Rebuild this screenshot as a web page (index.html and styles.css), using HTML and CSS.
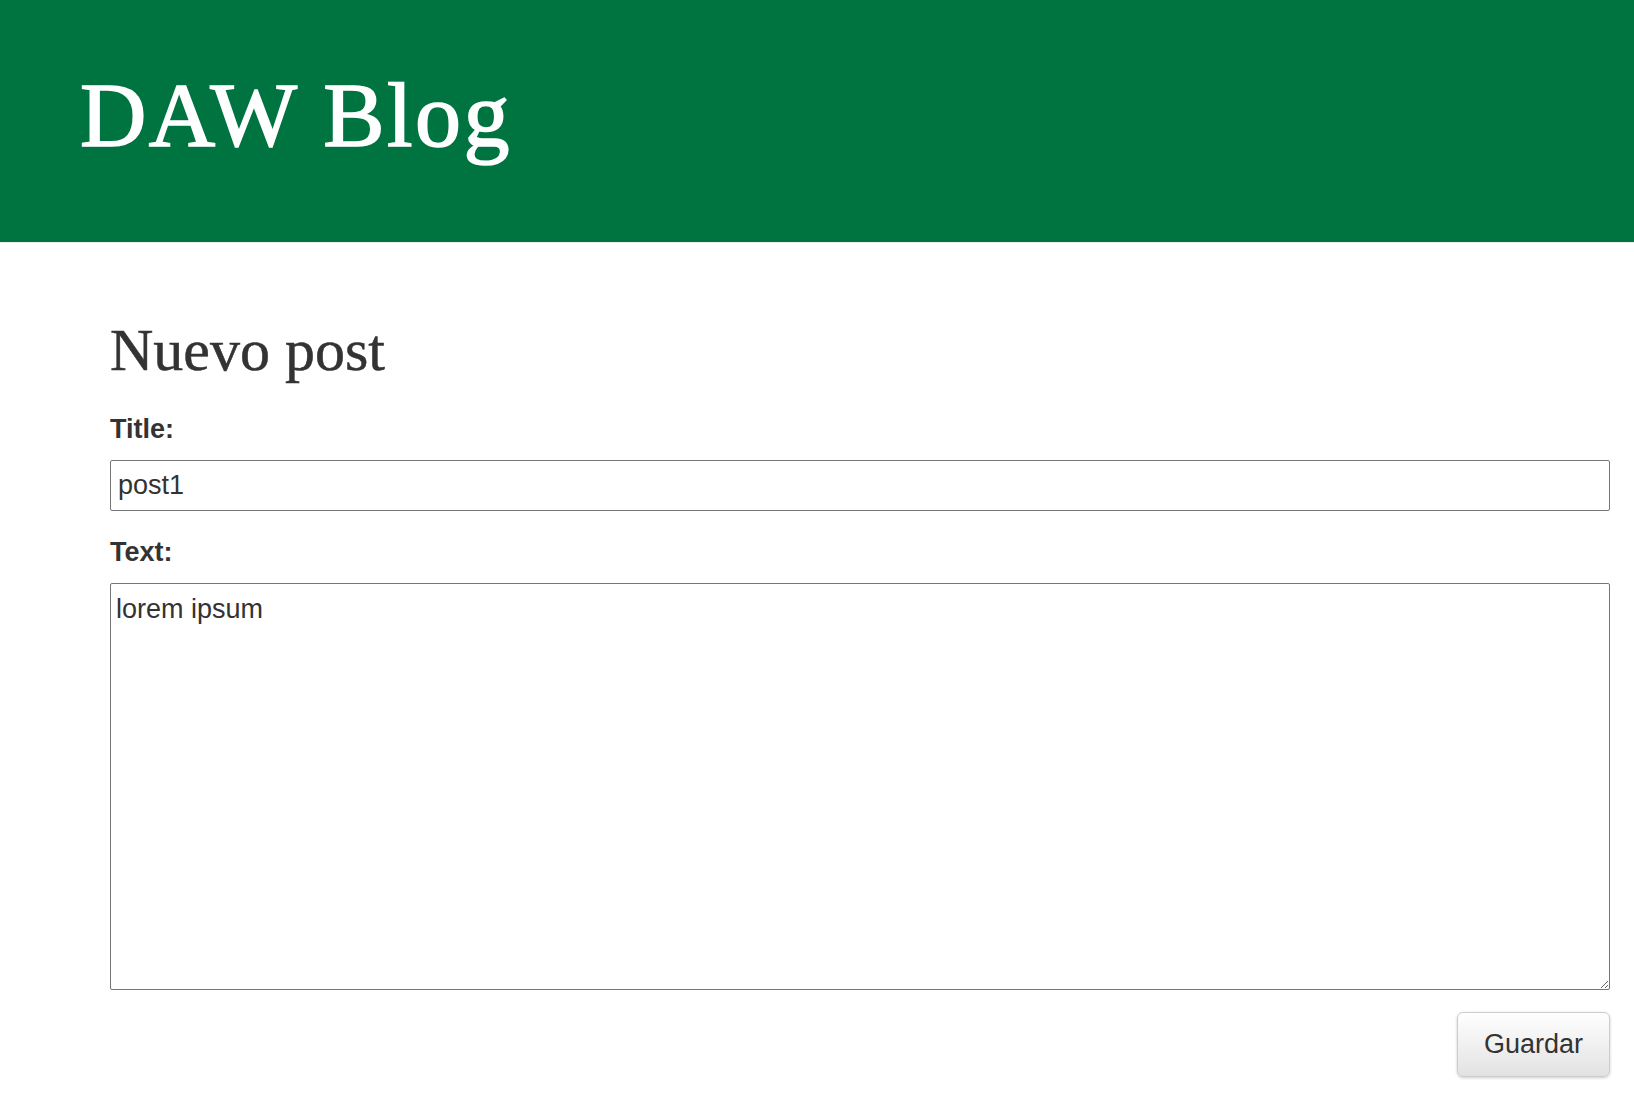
FILE: index.html
```html
<!DOCTYPE html>
<html lang="es">
<head>
<meta charset="utf-8">
<title>DAW Blog</title>
<link rel="stylesheet" href="styles.css">
</head>
<body>
<header class="site-header">
  <h1 class="site-title">DAW Blog</h1>
</header>
<main class="content">
  <h2 class="page-title">Nuevo post</h2>
  <form class="post-form">
    <label class="field-label" for="title">Title:</label>
    <input class="field-input" id="title" type="text" value="post1">
    <label class="field-label field-label--text" for="text">Text:</label>
    <textarea class="field-textarea" id="text">lorem ipsum</textarea>
    <div class="actions">
      <button class="btn" type="button">Guardar</button>
    </div>
  </form>
</main>
</body>
</html>
```

FILE: styles.css
```css
html, body {
  margin: 0;
  padding: 0;
  background: #fff;
}

body {
  font-family: "Liberation Sans", Arial, sans-serif;
  color: #333;
}

.site-header {
  background: #007440;
  height: 243px;
  box-sizing: border-box;
  padding: 69px 0 0 80px;
  border-bottom: 1px solid #ececec;
}

.site-title {
  margin: 0;
  font-family: "Liberation Serif", "Times New Roman", serif;
  font-weight: normal;
  font-size: 92px;
  line-height: 1;
  letter-spacing: 2.4px;
  color: #fff;
  -webkit-text-stroke: 1.6px #fff;
}

.content {
  padding: 77px 24px 20px 110px;
}

.page-title {
  margin: 0;
  font-family: "Liberation Serif", "Times New Roman", serif;
  font-weight: normal;
  font-size: 60px;
  line-height: 1;
  color: #333;
  -webkit-text-stroke: 0.5px #333;
}

.post-form {
  display: flex;
  flex-direction: column;
  margin-top: 36px;
}

.field-label {
  font-weight: bold;
  font-size: 27px;
  line-height: 1;
  color: #333;
  margin-bottom: 17px;
}

.field-label--text {
  margin-top: 28px;
  margin-bottom: 17px;
}

.field-input,
.field-textarea {
  font-family: "Liberation Sans", Arial, sans-serif;
  font-size: 27px;
  color: #333;
  border: 1px solid #767676;
  border-radius: 2px;
  box-sizing: border-box;
  width: 100%;
  margin: 0;
  background: #fff;
}

.field-input {
  height: 51px;
  padding: 0 7px;
}

.field-textarea {
  height: 407px;
  padding: 10px 5px 8px;
  resize: vertical;
}

.actions {
  display: flex;
  justify-content: flex-end;
  margin-top: 22px;
}

.btn {
  width: 153px;
  height: 65px;
  font-family: "Liberation Sans", Arial, sans-serif;
  font-size: 27px;
  color: #333;
  background: linear-gradient(#fff, #e2e2e2);
  border: 1px solid #ccc;
  border-radius: 6px;
  box-shadow: 0 1px 3px rgba(0,0,0,0.2);
}
```
